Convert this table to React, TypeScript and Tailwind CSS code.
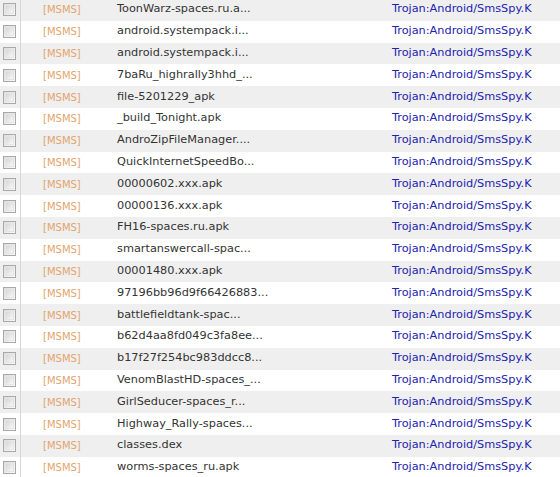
const files = [
  "ToonWarz-spaces.ru.a...",
  "android.systempack.i...",
  "android.systempack.i...",
  "7baRu_highrally3hhd_...",
  "file-5201229_apk",
  "_build_Tonight.apk",
  "AndroZipFileManager....",
  "QuickInternetSpeedBo...",
  "00000602.xxx.apk",
  "00000136.xxx.apk",
  "FH16-spaces.ru.apk",
  "smartanswercall-spac...",
  "00001480.xxx.apk",
  "97196bb96d9f66426883...",
  "battlefieldtank-spac...",
  "b62d4aa8fd049c3fa8ee...",
  "b17f27f254bc983ddcc8...",
  "VenomBlastHD-spaces_...",
  "GirlSeducer-spaces_r...",
  "Highway_Rally-spaces...",
  "classes.dex",
  "worms-spaces_ru.apk",
];

function Checkbox() {
  return (
    <div className="h-[13px] w-[13px] border border-[#a9a9a9] bg-gradient-to-br from-[#dcdcdc] to-[#fbfbfb] p-[1px]">
      <div className="h-full w-full border border-[#e4e4e4] bg-gradient-to-br from-[#d6d6d6] to-[#f8f8f8]" />
    </div>
  );
}

export default function App() {
  return (
    <div className="h-[477px] w-[560px] overflow-hidden bg-white font-['DejaVu_Sans',Verdana,sans-serif]">
      <div className="-mt-[1px]">
        {files.map((name, i) => (
          <div
            key={i}
            className={`flex h-[21.8px] items-center ${i % 2 === 0 ? "bg-[#efefef]" : "bg-white"}`}
          >
            <div className="flex h-full w-[21px] shrink-0 items-center justify-center border-r border-[#d6d6d6] pr-[2px]">
              <Checkbox />
            </div>
            <div className="w-[96px] shrink-0 pl-[22px] text-[10px] text-[#e3a46c]">[MSMS]</div>
            <div className="w-[275px] shrink-0 text-[11.3px] text-[#333333]">{name}</div>
            <div className="text-[11.3px] text-[#2222b0]">Trojan:Android/SmsSpy.K</div>
          </div>
        ))}
      </div>
    </div>
  );
}
